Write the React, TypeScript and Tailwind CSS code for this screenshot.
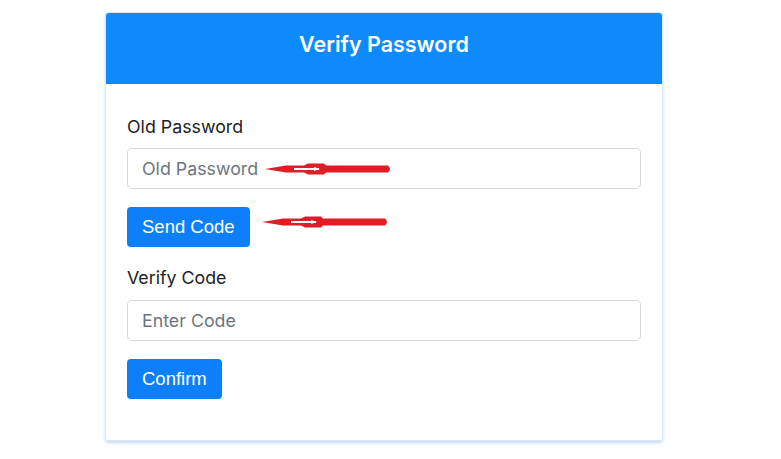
import React from "react";

function RedArrow({ className }: { className: string }) {
  return (
    <svg className={className} width="130" height="16" viewBox="0 0 130 16">
      <path d="M1 8 L22 4.5 L40 4.5 L44 2.5 L60 2.5 L62 4.5 L124 4.5 Q128 8 124 11.5 L62 11.5 L60 13.5 L44 13.5 L40 11.5 L22 11.5 Z" fill="#e21c25" />
      <path d="M30 7 L55 7 L55 9 L30 9 Z" fill="#ffffff" />
      <path d="M50 6 L56 8 L50 10 Z" fill="#ffffff" />
    </svg>
  );
}

export default function App() {
  return (
    <div className="w-[781px] h-[459px] bg-white pt-[12px] font-['Inter','Lato',sans-serif]">
      <div className="ml-[105px] w-[558px] border border-[#d9e8f5] rounded-[3px] bg-white shadow-[0_2px_3px_rgba(160,200,235,0.6)]">
        <div className="h-[71px] pb-[8px] bg-[#0d8bfd] rounded-t-[3px] flex items-center justify-center">
          <h1 className="text-white text-[21.5px] font-semibold">Verify Password</h1>
        </div>
        <div className="px-[21px] pt-[31px] pb-[41px]">
          <label className="block text-[17.8px] text-[#222] leading-[24px]">Old Password</label>
          <div className="relative mt-[9px]">
            <input
              className="w-full h-[41px] border border-[#d5d8dc] rounded-[5px] px-[14px] text-[17.8px] text-[#333] placeholder:text-[#6c757d] outline-none"
              placeholder="Old Password"
            />
            <RedArrow className="absolute left-[137px] top-[13px]" />
          </div>
          <div className="relative mt-[18px]">
            <button className="h-[40px] px-[15px] bg-[#0d7ffb] text-white rounded-[4px] text-[18.5px] font-['Liberation_Sans',Arial,sans-serif]">
              Send Code
            </button>
            <RedArrow className="absolute left-[134px] top-[7px]" />
          </div>
          <label className="block mt-[19px] text-[17.8px] text-[#222] leading-[24px]">Verify Code</label>
          <input
            className="mt-[10px] w-full h-[41px] border border-[#d5d8dc] rounded-[5px] px-[14px] text-[17.8px] text-[#333] placeholder:text-[#6c757d] outline-none"
            placeholder="Enter Code"
          />
          <button className="mt-[18px] h-[40px] px-[15px] bg-[#0d7ffb] text-white rounded-[4px] text-[18.5px] font-['Liberation_Sans',Arial,sans-serif]">
            Confirm
          </button>
        </div>
      </div>
    </div>
  );
}
